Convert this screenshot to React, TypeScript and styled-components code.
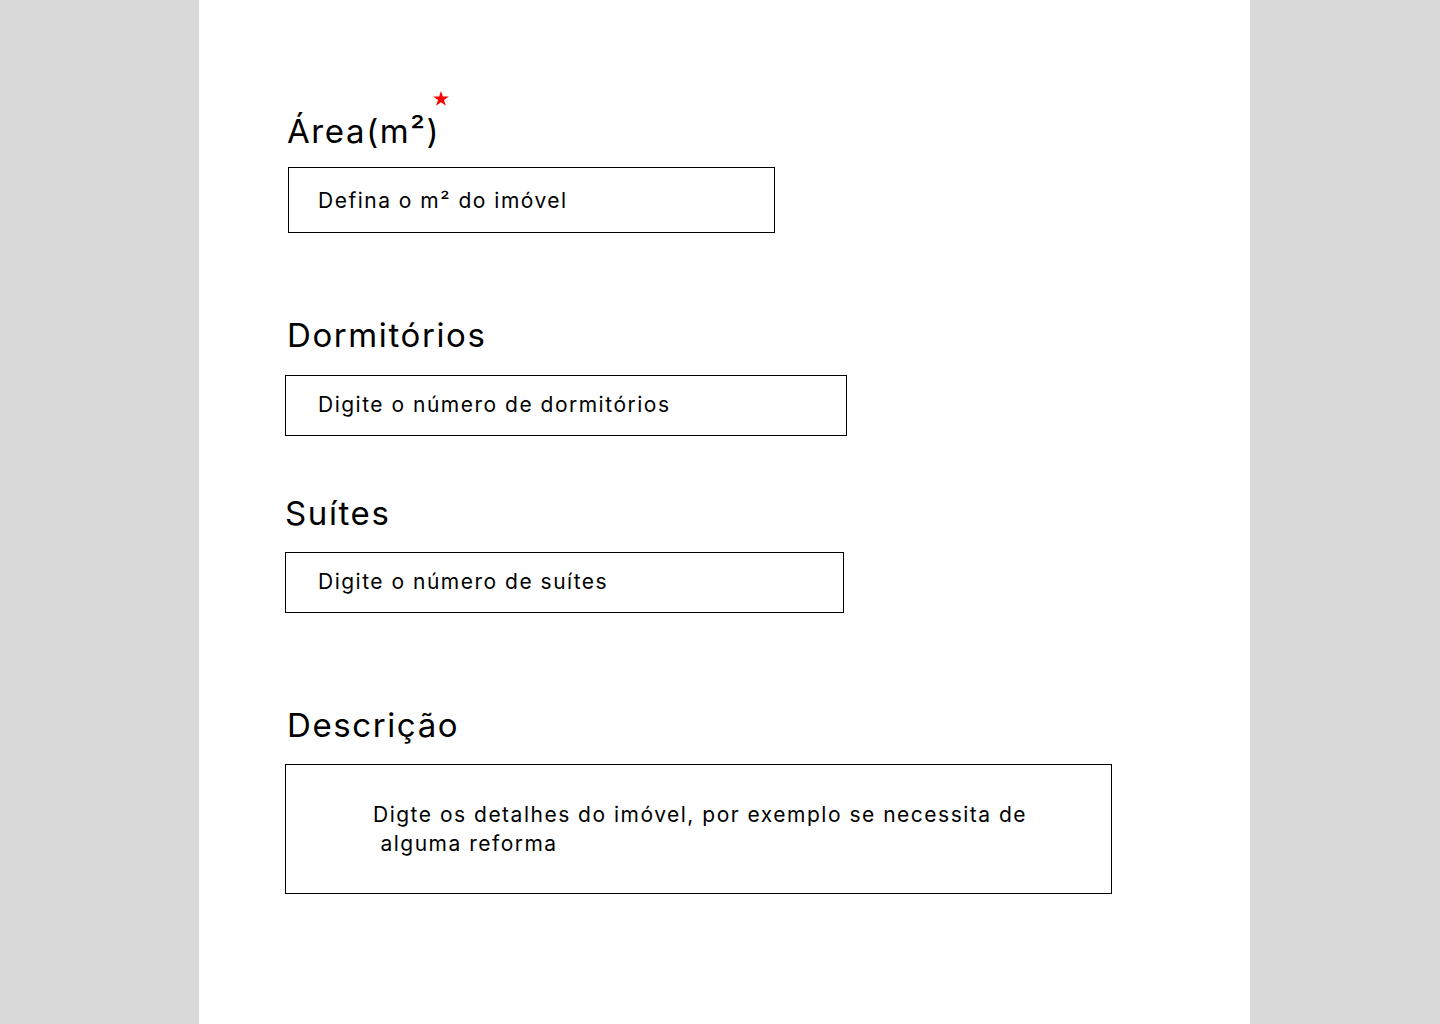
import React from "react";
import styled, { createGlobalStyle } from "styled-components";

const Global = createGlobalStyle`
  html, body { margin: 0; padding: 0; }
  body {
    background: #d9d9d9;
    font-family: Inter, "Noto Sans", sans-serif;
    color: #000;
  }
  * { box-sizing: border-box; }
`;

const Panel = styled.main`
  margin-left: 199px;
  width: 1051px;
  min-height: 1024px;
  background: #fff;
  padding: 112px 0 0 86px;
  display: flex;
  flex-direction: column;
`;

const Field = styled.section<{ $top: number; $gap: number }>`
  display: flex;
  flex-direction: column;
  align-items: flex-start;
  gap: ${(p) => p.$gap}px;
  margin-top: ${(p) => p.$top}px;
`;

const Label = styled.label<{ $indent: number }>`
  position: relative;
  display: inline-block;
  margin-left: ${(p) => p.$indent}px;
  font-family: Inter, "Noto Sans", sans-serif;
  font-size: 33px;
  line-height: 39px;
  letter-spacing: 1.6px;
  font-weight: 400;
  color: #000;
`;

const Star = styled.svg`
  position: absolute;
  right: -9px;
  top: -21px;
  width: 16px;
  height: 15px;
`;

const TextInput = styled.input<{ $w: number; $h: number; $pad: number; $indent: number; $lift: number }>`
  width: ${(p) => p.$w}px;
  height: ${(p) => p.$h}px;
  margin: 0 0 0 ${(p) => p.$indent}px;
  padding: 0 0 ${(p) => p.$lift}px ${(p) => p.$pad}px;
  border: 1px solid #000;
  border-radius: 0;
  background: #fff;
  font-family: Inter, "Noto Sans", sans-serif;
  font-size: 21px;
  letter-spacing: 1.5px;
  color: #000;
  outline: none;
  &::placeholder { color: #000; opacity: 1; }
`;

const TextArea = styled.textarea`
  width: 827px;
  height: 130px;
  margin: 0;
  padding: 35px 20px 0 87px;
  border: 1px solid #000;
  border-radius: 0;
  resize: none;
  background: #fff;
  font-family: Inter, "Noto Sans", sans-serif;
  font-size: 21px;
  line-height: 29px;
  letter-spacing: 1.5px;
  color: #000;
  outline: none;
  overflow: hidden;
  &::placeholder { color: #000; opacity: 1; white-space: pre-wrap; }
`;

export default function App() {
  return (
    <>
      <Global />
      <Panel>
        <Field $top={0} $gap={16}>
          <Label $indent={2} htmlFor="area">
            Área(m²)
            <Star viewBox="0 0 24 23" aria-hidden="true">
              <path
                d="M12 0l2.83 8.6H24l-7.4 5.35 2.83 8.65L12 17.25 4.57 22.6 7.4 13.95 0 8.6h9.17z"
                fill="#ff0000"
              />
            </Star>
          </Label>
          <TextInput id="area" $w={487} $h={66} $pad={29} $indent={3} $lift={0} placeholder="Defina o m² do imóvel" />
        </Field>

        <Field $top={83} $gap={20}>
          <Label $indent={2} htmlFor="dorm">Dormitórios</Label>
          <TextInput id="dorm" $w={562} $h={61} $pad={32} $indent={0} $lift={2} placeholder="Digite o número de dormitórios" />
        </Field>

        <Field $top={58} $gap={19}>
          <Label $indent={0} htmlFor="suites">Suítes</Label>
          <TextInput id="suites" $w={559} $h={61} $pad={32} $indent={0} $lift={2} placeholder="Digite o número de suítes" />
        </Field>

        <Field $top={93} $gap={19}>
          <Label $indent={2} htmlFor="desc">Descrição</Label>
          <TextArea
            id="desc"
            placeholder={"Digte os detalhes do imóvel, por exemplo se necessita de\n alguma reforma"}
          />
        </Field>
      </Panel>
    </>
  );
}
